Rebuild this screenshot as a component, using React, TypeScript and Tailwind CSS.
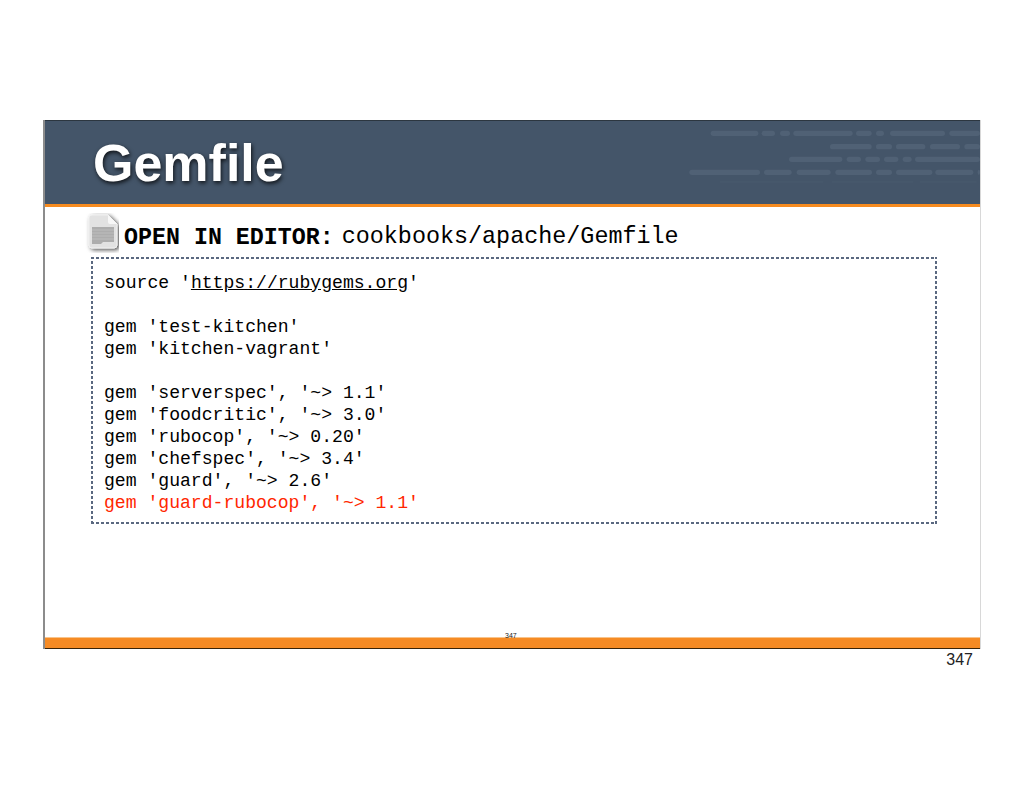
const codeLines = [
  "gem 'test-kitchen'",
  "gem 'kitchen-vagrant'",
  "",
  "gem 'serverspec', '~> 1.1'",
  "gem 'foodcritic', '~> 3.0'",
  "gem 'rubocop', '~> 0.20'",
  "gem 'chefspec', '~> 3.4'",
  "gem 'guard', '~> 2.6'",
];

// header texture, in x-from/x-to pairs per row
const textureRows: [number, number[][]][] = [
  [70, [[92, 235], [245, 285], [300, 330], [340, 518], [528, 575], [588, 612], [630, 795], [808, 900]]],
  [110, [[450, 575], [588, 636], [648, 736], [750, 840], [853, 900]]],
  [148, [[327, 487], [500, 543], [556, 600], [612, 655], [668, 695], [705, 900]]],
  [187, [[28, 240], [252, 335], [350, 452], [466, 576], [588, 636], [648, 757], [766, 880], [893, 900]]],
];

function HeaderTexture() {
  return (
    <svg className="absolute right-0 top-0" width="300" height="83" viewBox="0 33 900 249">
      {textureRows.map(([y, segs]) =>
        segs.map(([a, b]) => (
          <rect key={y + "-" + a} x={a} y={y - 8} width={b - a} height={16} rx={8} fill="#506175" />
        ))
      )}
      <path d="M120 216 H430 M455 216 H700 M720 216 H890" stroke="#4c5d71" strokeWidth="2" />
    </svg>
  );
}

function FileIcon() {
  return (
    <svg width="34" height="40" viewBox="0 0 34 40" className="absolute left-[-6px] top-[-4px]">
      <defs>
        <filter id="sh" x="-30%" y="-30%" width="170%" height="170%">
          <feDropShadow dx="2" dy="1.5" stdDeviation="2" floodColor="#000" floodOpacity="0.7" />
        </filter>
      </defs>
      <path
        d="M7 2 H23 L32 11 V32 Q32 35 29 35 H7 Q4 35 4 32 V5 Q4 2 7 2 Z"
        fill="#e2e2e2"
        stroke="#f0f0f0"
        strokeWidth="1"
        filter="url(#sh)"
      />
      <path d="M23 2 L32 11 H25 Q23 11 23 9 Z" fill="#f7f7f7" />
      <path d="M7 14 H29 V29 H18 L16 31 H7 Z" fill="#adadad" />
      <path d="M7 17 H29 M7 20 H29 M7 23 H29 M7 26 H29" stroke="#bdbdbd" strokeWidth="1" />
    </svg>
  );
}

export default function App() {
  return (
    <div className="h-[791px] w-[1024px] overflow-hidden bg-white pt-[120px] pl-[43px] font-['Liberation_Mono',monospace] text-black">
      <div className="flex h-[529px] w-[938px] flex-col border-l-2 border-r border-l-[#8c8c8c] border-r-[#d8d8d8]">
        {/* Title bar */}
        <div className="relative h-[84px] shrink-0 overflow-hidden border-t border-t-[#2c3640] bg-[#445569] pl-[48px]">
          <HeaderTexture />
          <h1 className="relative pt-[12px] font-['Liberation_Sans',sans-serif] text-[52px] leading-[60px] font-bold text-white [text-shadow:1px_2px_4px_rgba(0,0,0,0.8)]">
            Gemfile
          </h1>
        </div>
        <div className="h-[3px] shrink-0 bg-[#f68b1f]" />

        {/* Slide body */}
        <div className="flex-1 pl-[46px]">
          <div className="relative mt-[10px] flex h-[38px] items-center pt-[4px] pl-[33px]">
            <FileIcon />
            <span className="text-[23.3px] font-bold">OPEN IN EDITOR:</span>
            <span className="ml-[8px] text-[23.4px]">cookbooks/apache/Gemfile</span>
          </div>
          {/* dash pattern is 3 on / 2 off, a plain dashed border comes out too long */}
          <div className="mt-[2px] h-[267px] w-[846px] px-[13px] pt-[15px] text-[18.1px] leading-[22px] whitespace-pre [background:repeating-linear-gradient(90deg,#5a6880_0_3px,transparent_3px_5px)_top/100%_2px_no-repeat,repeating-linear-gradient(90deg,#5a6880_0_3px,transparent_3px_5px)_bottom/100%_2px_no-repeat,repeating-linear-gradient(0deg,#5a6880_0_3px,transparent_3px_5px)_left/2px_100%_no-repeat,repeating-linear-gradient(0deg,#5a6880_0_3px,transparent_3px_5px)_right/2px_100%_no-repeat]">
            <div>
              source '<span className="underline">https://rubygems.org</span>'
            </div>
            <div className="h-[22px]" />
            {codeLines.map((line, i) => (
              <div key={i} className="h-[22px]">
                {line}
              </div>
            ))}
            <div className="text-[#ff2600]">gem 'guard-rubocop', '~&gt; 1.1'</div>
          </div>
        </div>

        {/* Footer */}
        <div className="relative h-[12px] shrink-0 border-t border-b border-t-[#f8c48c] border-b-[#3a2408] bg-[#f68b24]">
          <span className="absolute left-[460px] top-[-6px] font-['Liberation_Sans',sans-serif] text-[7px] leading-[8px] text-[#222]">
            347
          </span>
        </div>
      </div>
      <div className="w-[930px] pt-[2px] text-right font-['Liberation_Sans',sans-serif] text-[16px] leading-[18px] text-[#222]">
        347
      </div>
    </div>
  );
}
